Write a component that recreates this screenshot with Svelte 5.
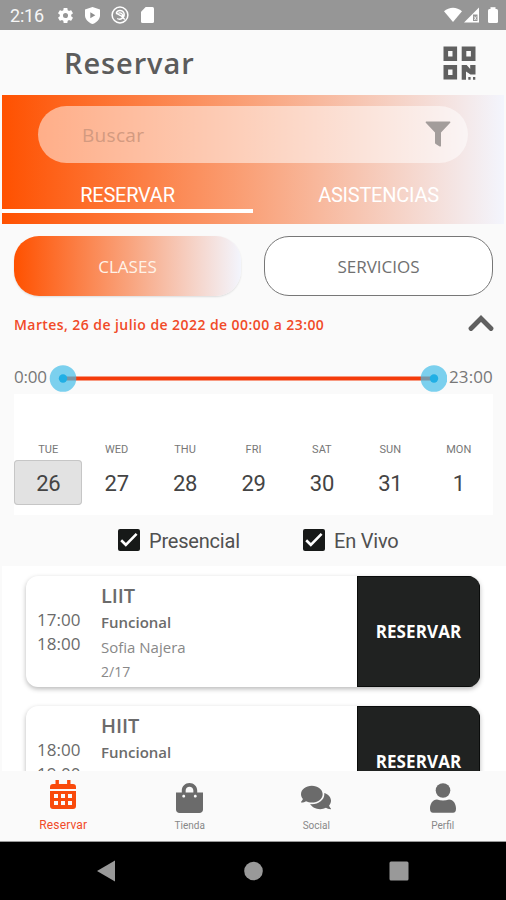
<script>
  const days = [
    ['TUE', 26], ['WED', 27], ['THU', 28], ['FRI', 29], ['SAT', 30], ['SUN', 31], ['MON', 1]
  ];
  const classes = [
    { name: 'LIIT', from: '17:00', to: '18:00', kind: 'Funcional', coach: 'Sofia Najera', spots: '2/17' },
    { name: 'HIIT', from: '18:00', to: '19:00', kind: 'Funcional', coach: 'Vanessa Villarreal', spots: '0/17' }
  ];
</script>

{#snippet check(label, cls)}
  <div class="check {cls}">
    <svg width="22" height="22" viewBox="0 0 22 22">
      <rect width="22" height="22" rx="2" fill="#171918" />
      <path d="M3.2 11.3l4.6 4.5L18.6 4.800" fill="none" stroke="#fff" stroke-width="2.600" />
    </svg>
    <span>{label}</span>
  </div>
{/snippet}

<div class="screen">
  <div class="status">
    <span class="clock">2:16</span>
    <svg class="gear" width="19" height="19" viewBox="0 0 24 24" fill="#fff"><path d="M19.14,12.94c0.04-0.3,0.06-0.61,0.06-0.94c0-0.32-0.02-0.64-0.07-0.94l2.03-1.58c0.18-0.14,0.23-0.41,0.12-0.61l-1.92-3.32c-0.12-0.22-0.37-0.29-0.59-0.22l-2.39,0.96c-0.5-0.38-1.03-0.7-1.62-0.94L14.4,2.81c-0.04-0.24-0.24-0.41-0.48-0.41h-3.84c-0.24,0-0.43,0.17-0.47,0.41L9.25,5.35C8.66,5.59,8.12,5.92,7.63,6.29L5.24,5.33c-0.22-0.08-0.47,0-0.59,0.22L2.74,8.87C2.62,9.08,2.66,9.34,2.86,9.48l2.03,1.58C4.84,11.36,4.8,11.69,4.8,12s0.02,0.64,0.07,0.94l-2.03,1.58c-0.18,0.14-0.23,0.41-0.12,0.61l1.92,3.32c0.12,0.22,0.37,0.29,0.59,0.22l2.39-0.96c0.5,0.38,1.03,0.7,1.62,0.94l0.36,2.54c0.05,0.24,0.24,0.41,0.48,0.41h3.84c0.24,0,0.44-0.17,0.47-0.41l0.36-2.54c0.59-0.24,1.13-0.56,1.62-0.94l2.39,0.96c0.22,0.08,0.47,0,0.59-0.22l1.92-3.32c0.12-0.22,0.07-0.47-0.12-0.61L19.14,12.94z M12,15.2a3.2,3.2 0 1 1 0-6.4a3.2,3.2 0 1 1 0,6.4z" /></svg>
    <svg class="shield" width="15" height="17" viewBox="0 0 15 17"><path d="M7.5 0L15 2.6v5.6c0 4-3 7.2-7.5 8.8C3 15.4 0 12.2 0 8.2V2.6z" fill="#fff" /><path d="M5.3 5.3v6l5-3z" fill="#8d8d8d" /></svg>
    <svg class="radar" width="18" height="18" viewBox="0 0 18 18" fill="none" stroke="#fff"><circle cx="9" cy="9" r="7.9" stroke-width="1.500" /><path d="M5.200 7.200C6.500 3.500 11.500 3.500 13 7.200c1.200 4-3.500 7.300-6.800 5.300M4.800 7.500c2.500-.5 3 2.500 5 2l4 4M7.500 7.200c2.500-1 4.500.8 4.200 3" stroke-width="1.400" /></svg>
    <svg class="sd" width="13" height="16" viewBox="0 0 13 16"><path d="M4.7 0H11.5A1.5 1.5 0 0 1 13 1.5V14.5A1.5 1.5 0 0 1 11.5 16H1.5A1.5 1.5 0 0 1 0 14.5V4.8z" fill="#fff" /></svg>
    <span class="grow"></span>
    <svg width="54" height="18" viewBox="0 0 54 18" fill="#fff"><path d="M0 5.3C5.2.6 12.8.6 18 5.3L9 16z" /><path d="M35 1.5V16.5H20z" /><path d="M29 8.500h4.500v6.500H29z" fill="#969696" /><path d="M30.300 10.500l2 3.500M30.300 14l2-3.500" stroke="#fff" stroke-width=".8" /><rect x="44" y="3" width="10" height="14" rx="1.5" /><rect x="46.5" y="1.2" width="5" height="3" /></svg>
  </div>

  <header>
    <h1>Reservar</h1>
    <svg width="33" height="34" viewBox="0 0 33 34" fill="none" stroke="#606060" stroke-width="4.600">
      <path d="M2.800 2.800h9v10h-9zM21 2.800h9.200v10H21zM2.800 21.300h9v10h-9z" />
      <g fill="#606060" stroke="none"><path d="M18.700 19h5l3.500 4V19h5.300v9.500h-5l-4.500-3v8.300h-4.300z" /><path d="M25.300 31h2.300v2.700h-2.300zM30 31h2.300v2.700H30z" /></g>
    </svg>
  </header>

  <section class="hero">
    <div class="search">
      <span>Buscar</span>
      <svg width="26" height="26" viewBox="0 0 26 26"><path d="M1.200.5h23.600q1.100.2.400 1.200L16 11.400v13.300q-.2 1.300-1.300.7l-4-2.400q-.7-.4-.7-1.200V11.400L.8 1.700Q.2.700 1.200.5z" fill="#a39d9b" /></svg>
    </div>
    <div class="tabs">
      <div class="tab on"><span>RESERVAR</span></div>
      <div class="tab"><span>ASISTENCIAS</span></div>
    </div>
  </section>

  <div class="modes">
    <button class="mode filled">CLASES</button>
    <button class="mode outline">SERVICIOS</button>
  </div>

  <div class="when">
    <span>Martes, 26 de julio de 2022 de 00:00 a 23:00</span>
    <svg width="26" height="18" viewBox="0 0 26 18"><path d="M3 14.500L13 4.500l10 10" fill="none" stroke="#606060" stroke-width="4.800" stroke-linecap="round" /></svg>
  </div>

  <div class="range">
    <span class="start">0:00</span>
    <svg width="398" height="28" viewBox="0 0 398 28">
      <path d="M14 14.500H385" stroke="#f43b0b" stroke-width="4.200" />
      <circle cx="14" cy="14.500" r="13.300" fill="#45bde8" fill-opacity=".7" />
      <circle cx="385" cy="14.500" r="13.300" fill="#45bde8" fill-opacity=".7" />
      <circle cx="14" cy="14.500" r="4.200" fill="#20afe5" /><circle cx="385" cy="14.500" r="4.200" fill="#20afe5" />
    </svg>
    <span class="end">23:00</span>
  </div>

  <div class="week">
    {#each days as [name, number], i}
      <div class="day">
        <span class="name">{name}</span>
        <span class="number" class:selected={i === 0}>{number}</span>
      </div>
    {/each}
  </div>

  <div class="checks">
    {@render check('Presencial', 'first')}
    {@render check('En Vivo', 'second')}
  </div>

  <main>
    {#each classes as c}
      <article>
        <div class="hours"><span>{c.from}</span><span>{c.to}</span></div>
        <div class="info">
          <h2>{c.name}</h2>
          <strong>{c.kind}</strong>
          <span class="coach">{c.coach}</span>
          <span class="spots">{c.spots}</span>
        </div>
        <button class="book">RESERVAR</button>
      </article>
    {/each}
  </main>

  <nav>
    <div class="item active">
      <svg width="26" height="30" viewBox="0 0 26 30" fill="#f94a0b"><path d="M5.5 0h3.4v4h8.2V0h3.4v4H23q3 0 3 3v2H0V7q0-3 3-3h2.5z" /><path fill-rule="evenodd" d="M0 11h26v15q0 3-3 3H3q-3 0-3-3zM4 14v4h4v-4zM11 14v4h4v-4zM18 14v4h4v-4zM4 21v4h4v-4zM11 21v4h4v-4zM18 21v4h4v-4z" /></svg>
      <span>Reservar</span>
    </div>
    <div class="item">
      <svg width="27" height="30" viewBox="0 0 448 512" preserveAspectRatio="none" fill="#6b6b6b"><path d="M352 160v-32C352 57.42 294.579 0 224 0 153.42 0 96 57.42 96 128v32H0v292c0 35 25 60 60 60h328c35 0 60-25 60-60V160h-96zm-192-32c0-35.29 28.71-64 64-64s64 28.71 64 64v32H160v-32zm160 120c-13.255 0-24-10.745-24-24s10.745-24 24-24 24 10.745 24 24-10.745 24-24 24zm-192 0c-13.255 0-24-10.745-24-24s10.745-24 24-24 24 10.745 24 24-10.745 24-24 24z" /></svg>
      <span>Tienda</span>
    </div>
    <div class="item social">
      <svg width="30" height="27" viewBox="0 0 576 512" fill="#6b6b6b"><path d="M416 192c0-88.4-93.1-160-208-160S0 103.6 0 192c0 34.3 14.1 65.9 38 92-13.4 30.2-35.5 54.2-35.8 54.5-2.2 2.3-2.8 5.7-1.5 8.7S4.8 352 8 352c36.6 0 66.9-12.3 88.7-25 32.2 15.7 70.3 25 111.3 25 114.9 0 208-71.6 208-160zm122 220c23.9-26 38-57.700 38-92 0-66.9-53.5-124.2-129.3-148.1.9 6.6 1.3 13.3 1.3 20.1 0 105.9-107.7 192-240 192-10.8 0-21.3-.8-31.7-1.9C207.8 439.6 281.8 480 368 480c41 0 79.1-9.2 111.3-25 21.8 12.7 52.1 25 88.7 25 3.2 0 6.1-1.9 7.3-4.8 1.3-2.9.7-6.3-1.5-8.7-.3-.3-22.4-24.2-35.8-54.5z" /></svg>
      <span>Social</span>
    </div>
    <div class="item">
      <svg width="26" height="30" viewBox="0 0 26 30" fill="#6b6b6b"><circle cx="13" cy="7.5" r="7.300" /><path d="M7 16.500q6 2.200 12 0c4.500 0 7 4.500 7 9q0 4.300-3 4.300H3q-3 0-3-4.300c0-4.500 2.500-9 7-9z" /></svg>
      <span>Perfil</span>
    </div>
  </nav>

  <footer>
    <svg width="506" height="58" viewBox="0 0 506 58" fill="#999"><path d="M115 18.5v21L97 29z" /><circle cx="253.5" cy="29" r="9.3" /><rect x="389.5" y="19.5" width="19" height="19" rx="1.5" /></svg>
  </footer>
</div>

<style>
  .screen {
    width: 506px; height: 900px; overflow: hidden; display: flex; flex-direction: column;
    background: #fafafa; color: #6b6b6b; font-family: "Open Sans", sans-serif; white-space: nowrap;
  }
  .screen > * { flex-shrink: 0; box-sizing: border-box; }
  svg { display: block; flex-shrink: 0; }
  button { font: inherit; border: 0; padding: 0; }

  .status { height: 30px; background: #969696; display: flex; align-items: center; padding: 0 8px 0 10px; }
  .clock { width: 46px; font: 18px/30px Roboto, sans-serif; color: #f6f6f6; letter-spacing: -.2px; padding-top: 1px; }
  .gear { margin-right: 10px; }
  .shield { margin-right: 11px; }
  .radar { margin-right: 12px; }
  .grow { flex: 1; }

  header { height: 65px; display: flex; justify-content: space-between; align-items: center; padding: 1px 30px 1px 64px; }
  h1 { margin: 0; font-size: 29px; line-height: 40px; font-weight: 600; color: #5c5c5c; letter-spacing: .9px; }

  .hero { height: 129px; margin: 0 2px; background: linear-gradient(90deg, #ff5100, #fa9f75 48%, #f3f5fd); padding-top: 11px; }
  .search {
    height: 57px; margin: 0 36px 0 36px; border-radius: 29px; background: rgba(255, 255, 255, .5);
    display: flex; justify-content: space-between; align-items: center; padding: 0 17px 2px 44px; box-sizing: border-box;
  }
  .search span { font-size: 19px; line-height: 28px; color: #d39a80; padding-top: 3px; letter-spacing: .3px; }
  .tabs { display: flex; height: 50px; }
  .tab { flex: 1; box-sizing: border-box; height: 50px; padding-top: 20px; border-bottom: 4px solid transparent; display: flex; justify-content: center; font: 20px/24px Roboto, sans-serif; letter-spacing: -.25px; color: #fff; }
  .on { border-color: #fff; }

  .modes { display: flex; gap: 23px; padding: 12px 13px 0 14px; height: 73px; }
  .mode { flex: 1; height: 60px; box-sizing: border-box; border-radius: 25px; font-size: 17px; }
  .filled { background: linear-gradient(90deg, #ff5100, #f9a27b 50%, #f3f5fd); color: #fff3e8; box-shadow: 0 1px 2px rgba(0, 0, 0, .12); }
  .outline { background: #fff; border: 1px solid #777; color: #707070; }

  .when { height: 55px; display: flex; justify-content: space-between; padding: 18px 12px 0 14px; font-size: 14px; line-height: 20px; font-weight: 600; letter-spacing: .43px; color: #f14a28; }
  .when svg { margin-top: -1px; }

  .range { height: 42px; display: flex; padding: 12px 13px 0 14px; font: 17px/28px "Open Sans", sans-serif; color: #777; }
  .range span { height: 28px; margin-top: -1px; }
  .start { width: 35px; letter-spacing: -.2px; }
  .range svg { margin-right: 2px; }
  .end { letter-spacing: .1px; }

  .week { height: 121px; margin: 0 13px 0 14px; background: #fff; display: flex; padding-top: 49px; font-family: Roboto, sans-serif; }
  .day { flex: 1; display: flex; flex-direction: column; text-align: center; }
  .name { font-size: 11px; line-height: 14px; color: #777; margin-bottom: 3px; }
  .number { height: 45px; line-height: 47px; font-size: 22px; color: #444; letter-spacing: -.3px; box-sizing: border-box; }
  .selected { background: #e2e2e2; border-radius: 4px; box-shadow: inset 0 0 0 1px #c6c6c6; }

  .checks { height: 51px; display: flex; padding-top: 14px; }
  .check { display: flex; gap: 9px; font: 20px/23px Roboto, sans-serif; letter-spacing: -.2px; color: #505050; }
  .check span { padding-top: 1px; }
  .first { margin-left: 118px; width: 185px; }

  main { height: 205px; overflow: hidden; margin-left: 2px; padding: 10px 26px 0 24px; background: #fff; }
  article { height: 111px; margin-bottom: 19px; border-radius: 12px; display: flex; background: #fff; overflow: hidden; box-shadow: 0 2px 5px rgba(0, 0, 0, .28); }
  .hours { width: 75px; display: flex; flex-direction: column; box-sizing: border-box; padding: 32px 0 0 11px; font-size: 17px; line-height: 24px; }
  .info { flex: 1; display: flex; flex-direction: column; }
  h2 { margin: 7px 0 0; font-size: 20px; line-height: 26px; font-weight: 600; letter-spacing: -.1px; }
  strong { font-size: 15px; line-height: 27px; font-weight: 600; }
  .coach { font-size: 15px; line-height: 22px; color: #888; }
  .spots { font-size: 14px; line-height: 28px; color: #888; }
  .book { width: 123px; background: #202221; color: #fff; font-size: 17px; font-weight: 700; letter-spacing: .1px; box-shadow: inset 0 0 0 1px #0a0c0b; }

  nav { height: 71px; display: flex; border-bottom: 1px solid #999; }
  .item { flex: 1; display: flex; flex-direction: column; align-items: center; justify-content: flex-end; box-sizing: border-box; padding-bottom: 8px; font: 10px/14px Roboto, sans-serif; color: #888; }
  .item span { margin-top: 6px; }
  .active { font-size: 12px; letter-spacing: .15px; color: #f14a28; padding-bottom: 9px; }
  .active span { margin-top: 8px; }
  .social span { margin-top: 8px; }
  footer { height: 58px; background: #000; }
</style>
